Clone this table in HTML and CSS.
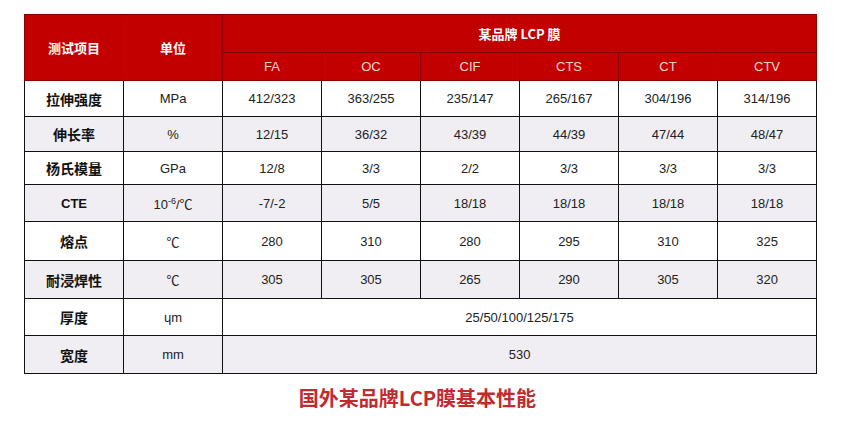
FILE: index.html
```html
<!DOCTYPE html>
<html lang="zh">
<head>
<meta charset="utf-8">
<link rel="stylesheet" href="styles.css">
</head>
<body>
<div class="page">
<table class="spec">
  <colgroup>
    <col><col><col><col><col><col><col><col>
  </colgroup>
  <thead>
    <tr class="h1">
      <th rowspan="2" class="zh">测试项目</th>
      <th rowspan="2" class="zh">单位</th>
      <th colspan="6" class="brand">某品牌 LCP 膜</th>
    </tr>
    <tr class="h2">
      <th>FA</th><th>OC</th><th>CIF</th><th>CTS</th><th>CT</th><th>CTV</th>
    </tr>
  </thead>
  <tbody>
    <tr class="r36"><td class="lbl">拉伸强度</td><td>MPa</td><td>412/323</td><td>363/255</td><td>235/147</td><td>265/167</td><td>304/196</td><td>314/196</td></tr>
    <tr class="alt r35"><td class="lbl">伸长率</td><td>%</td><td>12/15</td><td>36/32</td><td>43/39</td><td>44/39</td><td>47/44</td><td>48/47</td></tr>
    <tr class="r33"><td class="lbl">杨氏模量</td><td>GPa</td><td>12/8</td><td>3/3</td><td>2/2</td><td>3/3</td><td>3/3</td><td>3/3</td></tr>
    <tr class="alt r37"><td class="lbl lat">CTE</td><td>10<sup>-6</sup>/℃</td><td>-7/-2</td><td>5/5</td><td>18/18</td><td>18/18</td><td>18/18</td><td>18/18</td></tr>
    <tr class="r39"><td class="lbl">熔点</td><td>℃</td><td>280</td><td>310</td><td>280</td><td>295</td><td>310</td><td>325</td></tr>
    <tr class="alt r38"><td class="lbl">耐浸焊性</td><td>℃</td><td>305</td><td>305</td><td>265</td><td>290</td><td>305</td><td>320</td></tr>
    <tr class="r37"><td class="lbl">厚度</td><td>ɥm</td><td colspan="6">25/50/100/125/175</td></tr>
    <tr class="alt r38"><td class="lbl">宽度</td><td>mm</td><td colspan="6">530</td></tr>
  </tbody>
</table>
<p class="caption">国外某品牌LCP膜基本性能</p>
</div>
</body>
</html>
```
FILE: styles.css
```css
html, body {
  margin: 0;
  padding: 0;
  background: #ffffff;
}
.page {
  padding: 14px 0 0 24px;
  font-family: "Liberation Sans", Arial, "Noto Sans CJK SC", sans-serif;
}
.spec {
  border-collapse: collapse;
  table-layout: fixed;
  width: 793px;
  color: #222;
}
.spec col {
  width: 99px;
}
.spec th {
  background: #c20000;
  color: #ffffff;
  border: 1px solid #8a0000;
  font-weight: normal;
  padding: 0;
  text-align: center;
}
.spec th.zh, .spec th.brand {
  font-family: "Noto Sans CJK SC", sans-serif;
  font-weight: 700;
  font-size: 13px;
}
.h1 th {
  height: 37px;
}
.h2 th {
  height: 27px;
  font-size: 13px;
  color: #f6d6d6;
}
.spec td {
  border: 1px solid #111;
  text-align: center;
  font-size: 13px;
  padding: 0;
  background: #ffffff;
}
.spec tr.alt td {
  background: #f0eef3;
}
.spec td.lbl {
  font-family: "Noto Sans CJK SC", sans-serif;
  font-weight: 700;
  font-size: 14px;
  color: #111;
}
.spec td.lat {
  font-family: "Liberation Sans", Arial, sans-serif;
  font-size: 13px;
}
.spec sup {
  font-size: 9px;
  line-height: 0;
}
.r33 td { height: 32px; }
.r35 td { height: 34px; }
.r36 td { height: 35px; }
.r37 td { height: 36px; }
.r38 td { height: 37px; }
.r39 td { height: 38px; }
.caption {
  margin: 13px 0 0 0;
  width: 787px;
  text-align: center;
  font-family: "Noto Sans CJK SC", sans-serif;
  font-weight: 700;
  font-size: 20px;
  color: #c12a2e;
  line-height: 22px;
}
```
